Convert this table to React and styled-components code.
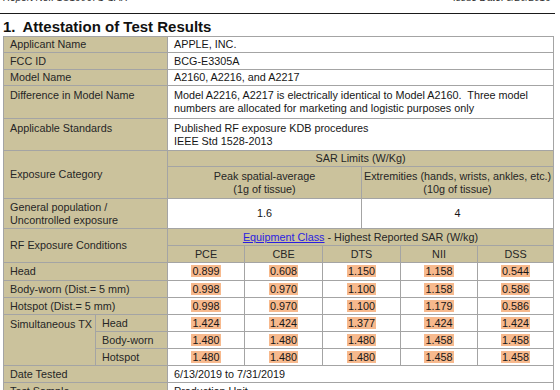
import React from "react";
import styled, { createGlobalStyle } from "styled-components";

const GlobalStyle = createGlobalStyle`
  body {
    margin: 0;
    background: #ffffff;
    font-family: "Liberation Sans", Arial, sans-serif;
    color: #1e1e1e;
    overflow: hidden;
  }
`;

const Page = styled.div`
  width: 560px;
  height: 390px;
  overflow: hidden;
`;

const TopBar = styled.header`
  width: 555px;
  height: 13px;
  overflow: hidden;
  border-bottom: 1px solid #1a1a1a;
  display: flex;
  justify-content: space-between;
  font-size: 10px;
  line-height: 10px;
  font-style: italic;
  color: #333;
`;

const TopText = styled.span`
  margin-top: -7px;
  padding: 0 ${(p) => (p.$right ? "4px" : "0")} 0 ${(p) => (p.$right ? "0" : "3px")};
`;

const Title = styled.h1`
  margin: 0;
  padding: 4px 0 0 3px;
  height: 17px;
  font-size: 15px;
  line-height: 17px;
  font-weight: bold;
  color: #111;
  display: flex;
  gap: 7px;
`;

const Table = styled.table`
  margin: 1px 0 0 3px;
  width: 550px;
  border-collapse: collapse;
  table-layout: fixed;
  font-size: 10.8px;
  line-height: 12.5px;
  border: 1px solid #7d7d7d;
`;

const Row = styled.tr`
  height: ${(p) => p.$h}px;
`;

const Cell = styled.td`
  border: 1px solid #a4a4a4;
  border-left: ${(p) => (p.$dark ? "1px solid #1c1c1c" : "1px solid #a4a4a4")};
  padding: ${(p) => (p.$top ? "3px 6px 0" : p.$center ? "0 2px" : "0 6px")};
  background: ${(p) => (p.$tan ? "#cbc29c" : "#ffffff")};
  text-align: ${(p) => (p.$center ? "center" : "left")};
  vertical-align: ${(p) => (p.$top ? "top" : "middle")};
  white-space: nowrap;
  overflow: hidden;
  color: ${(p) => (p.$tan ? "#262626" : "#161616")};
`;

const Sar = styled.span`
  background: #f7b98d;
  padding: 0 1px;
`;

const ClassLink = styled.a`
  color: #2a1ee0;
  text-decoration: underline;
`;

const widths = [92, 72, 77, 78, 39, 39, 77, 76];

const single = [
  { h: 18, label: "Head", v: ["0.899", "0.608", "1.150", "1.158", "0.544"] },
  { h: 17, label: "Body-worn (Dist.= 5 mm)", v: ["0.998", "0.970", "1.100", "1.158", "0.586"] },
  { h: 17, label: "Hotspot (Dist.= 5 mm)", v: ["0.998", "0.970", "1.100", "1.179", "0.586"] },
];

const simultaneous = [
  { label: "Head", v: ["1.424", "1.424", "1.377", "1.424", "1.424"] },
  { label: "Body-worn", v: ["1.480", "1.480", "1.480", "1.458", "1.458"] },
  { label: "Hotspot", v: ["1.480", "1.480", "1.480", "1.458", "1.458"] },
];

const Values = ({ v }) => (
  <>
    <Cell $center><Sar>{v[0]}</Sar></Cell>
    <Cell $center><Sar>{v[1]}</Sar></Cell>
    <Cell $center $dark colSpan={2}><Sar>{v[2]}</Sar></Cell>
    <Cell $center><Sar>{v[3]}</Sar></Cell>
    <Cell $center><Sar>{v[4]}</Sar></Cell>
  </>
);

const App = () => {
  return (
    <Page>
      <GlobalStyle />
      <TopBar>
        <TopText>Report No.: 1C19067S-SAR</TopText>
        <TopText $right>Issue Date: 8/20/2019</TopText>
      </TopBar>
      <Title>
        <span>1.</span>
        <span>Attestation of Test Results</span>
      </Title>
      <Table>
        <colgroup>
          {widths.map((w, i) => (
            <col key={i} style={{ width: w }} />
          ))}
        </colgroup>
        <tbody>
          <Row $h={16}>
            <Cell $tan colSpan={2}>Applicant Name</Cell>
            <Cell colSpan={6}>APPLE, INC.</Cell>
          </Row>
          <Row $h={17}>
            <Cell $tan colSpan={2}>FCC ID</Cell>
            <Cell colSpan={6}>BCG-E3305A</Cell>
          </Row>
          <Row $h={16}>
            <Cell $tan colSpan={2}>Model Name</Cell>
            <Cell colSpan={6}>A2160, A2216, and A2217</Cell>
          </Row>
          <Row $h={33}>
            <Cell $tan $top colSpan={2}>Difference in Model Name</Cell>
            <Cell $top colSpan={6}>
              Model A2216, A2217 is electrically identical to Model A2160.&nbsp; Three model
              <br />
              numbers are allocated for marketing and logistic purposes only
            </Cell>
          </Row>
          <Row $h={32}>
            <Cell $tan $top colSpan={2}>Applicable Standards</Cell>
            <Cell $top colSpan={6}>
              Published RF exposure KDB procedures
              <br />
              IEEE Std 1528-2013
            </Cell>
          </Row>
          <Row $h={16}>
            <Cell $tan colSpan={2} rowSpan={2}>Exposure Category</Cell>
            <Cell $tan $center colSpan={6}>SAR Limits (W/Kg)</Cell>
          </Row>
          <Row $h={32}>
            <Cell $tan $center colSpan={3}>
              Peak spatial-average
              <br />
              (1g of tissue)
            </Cell>
            <Cell $tan $center colSpan={3}>
              Extremities (hands, wrists, ankles, etc.)
              <br />
              (10g of tissue)
            </Cell>
          </Row>
          <Row $h={30}>
            <Cell $tan colSpan={2}>
              General population /
              <br />
              Uncontrolled exposure
            </Cell>
            <Cell $center colSpan={3}>1.6</Cell>
            <Cell $center colSpan={3}>4</Cell>
          </Row>
          <Row $h={17}>
            <Cell $tan colSpan={2} rowSpan={2}>RF Exposure Conditions</Cell>
            <Cell $tan $center colSpan={6}>
              <ClassLink href="#equipment-class">Equipment Class</ClassLink> - Highest Reported SAR (W/kg)
            </Cell>
          </Row>
          <Row $h={17}>
            <Cell $tan $center>PCE</Cell>
            <Cell $tan $center>CBE</Cell>
            <Cell $tan $center $dark colSpan={2}>DTS</Cell>
            <Cell $tan $center>NII</Cell>
            <Cell $tan $center>DSS</Cell>
          </Row>
          {single.map((r) => (
            <Row key={r.label} $h={r.h}>
              <Cell $tan colSpan={2}>{r.label}</Cell>
              <Values v={r.v} />
            </Row>
          ))}
          {simultaneous.map((r, i) => (
            <Row key={r.label} $h={17}>
              {i === 0 && (
                <Cell $tan $top rowSpan={3}>Simultaneous TX</Cell>
              )}
              <Cell $tan>{r.label}</Cell>
              <Values v={r.v} />
            </Row>
          ))}
          <Row $h={17}>
            <Cell $tan colSpan={2}>Date Tested</Cell>
            <Cell colSpan={6}>6/13/2019 to 7/31/2019</Cell>
          </Row>
          <Row $h={17}>
            <Cell $tan colSpan={2}>Test Sample</Cell>
            <Cell colSpan={6}>Production Unit</Cell>
          </Row>
        </tbody>
      </Table>
    </Page>
  );
};

export default App;
